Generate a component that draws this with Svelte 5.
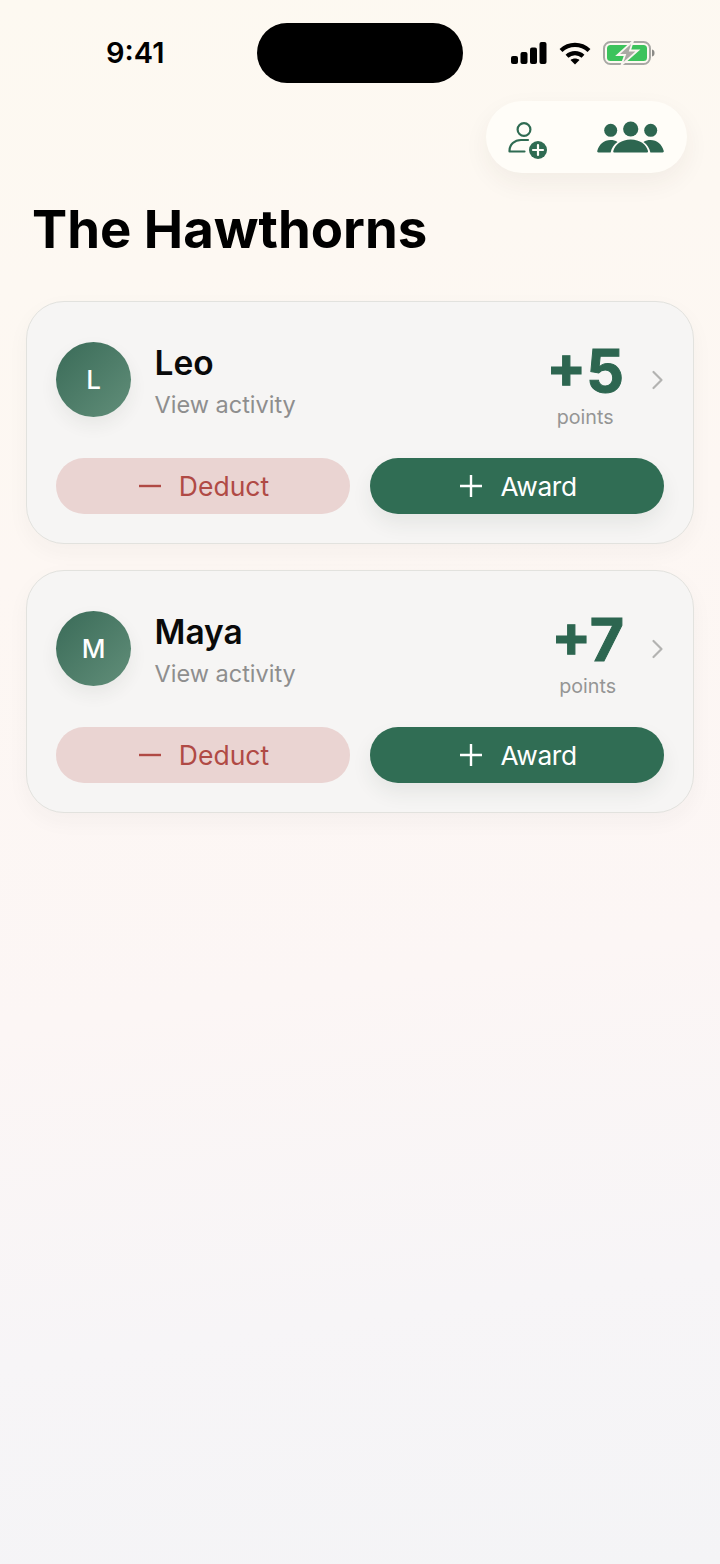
<script>
  const kids = [
    { name: 'Leo', initial: 'L', points: '+5' },
    { name: 'Maya', initial: 'M', points: '+7' }
  ];
</script>

<div class="page">
  <header class="status">
    <span class="time">9:41</span>
    <div class="island"></div>
    <div class="indicators">
      <svg width="36" height="22" viewBox="0 0 36 22" fill="#000">
        <rect x="0" y="14" width="7" height="8" rx="2" />
        <rect x="9.500" y="10" width="7" height="12" rx="2" />
        <rect x="19" y="5.500" width="7" height="16.500" rx="2" />
        <rect x="28.500" y="0" width="7" height="22" rx="2" />
      </svg>
      <svg width="32" height="23" viewBox="0 0 32 23" fill="none" stroke="#000" stroke-width="4.200">
        <path d="M2 8.500C10 1 22 1 30 8.500" />
        <path d="M8 14.200C12.500 10 19.500 10 24 14.200" />
        <path d="M16 22.500l-4.500-4.600c2.500-2 6.500-2 9 0z" fill="#000" stroke="none" />
      </svg>
      <svg width="52" height="24" viewBox="0 0 52 24">
        <rect x="1" y="1" width="46" height="22" rx="6.500" fill="none" stroke="#a8a8a4" stroke-width="2" />
        <rect x="4" y="4" width="40" height="16" rx="3.500" fill="#3cc35c" />
        <path d="M49 8.500c2 .5 2.500 1.800 2.500 3.500s-.5 3-2.500 3.500z" fill="#8a8a86" />
        <path d="M30 0 14.500 14h7.500l-3.500 10L35 9.500h-8z" fill="#a9a9a3" stroke="#f9f6f0" stroke-width="1.800" />
      </svg>
    </div>
  </header>

  <div class="toolbar">
    <div class="pill">
      <button class="icon-btn" aria-label="Add member">
        <svg width="42" height="44" viewBox="0 0 42 44" fill="none">
          <circle cx="16" cy="14.500" r="6.400" stroke="#2f6b52" stroke-width="2.200" />
          <path d="M1.500 36c0-6.500 5-11 11.500-11h7M1.500 36.500h15" stroke="#2f6b52" stroke-width="2.200" stroke-linecap="round" />
          <circle cx="30" cy="35" r="9" fill="#2f6b52" />
          <path d="M30 30v10M25 35h10" stroke="#fffdf9" stroke-width="2.200" stroke-linecap="round" />
        </svg>
      </button>
      <button class="icon-btn" aria-label="Family">
        <svg width="68" height="34" viewBox="0 0 68 34" fill="#2d6650">
          <circle cx="13.700" cy="10.300" r="6.500" />
          <circle cx="33.700" cy="9" r="7.600" />
          <circle cx="53.700" cy="10.300" r="6.500" />
          <path d="M1.500 32.500c-1 0-1.500-.7-1.200-1.700C2 24.500 7 20 13.500 20c2.600 0 5 .6 7 2-3.600 2.500-5.900 6-6.900 10.500z" />
          <path d="M65.500 32.500c1 0 1.500-.7 1.200-1.700C65 24.500 60 20 53.500 20c-2.600 0-5 .6-7 2 3.600 2.500 5.900 6 6.900 10.500z" />
          <path d="M17.500 32.500c-1 0-1.500-.7-1.200-1.500C18 24.500 24.500 19.500 33.700 19.500S49.500 24.500 51 31c.2.800-.3 1.500-1.200 1.500z" />
        </svg>
      </button>
    </div>
  </div>

  <h1>The Hawthorns</h1>

  <div class="list">
    {#each kids as kid}
      <section class="card">
        <div class="top">
          <div class="avatar">{kid.initial}</div>
          <div class="who">
            <div class="name">{kid.name}</div>
            <div class="sub">View activity</div>
          </div>
          <div class="score">
            <div class="num">{kid.points}</div>
            <div class="label">points</div>
          </div>
          <svg class="chev" width="14" height="20" viewBox="0 0 14 20" fill="none">
            <path d="M3.500 2 11.500 10l-8 8" stroke="#b3b3b1" stroke-width="2.200" stroke-linecap="round" stroke-linejoin="round" />
          </svg>
        </div>
        <div class="actions">
          <button class="btn deduct">
            <svg width="24" height="24" viewBox="0 0 24 24"><path d="M1 12h22" stroke="#b04a45" stroke-width="2.400" /></svg>
            Deduct
          </button>
          <button class="btn award">
            <svg width="24" height="24" viewBox="0 0 24 24"><path d="M1 12h22M12 1v22" stroke="#fff" stroke-width="2.400" /></svg>
            Award
          </button>
        </div>
      </section>
    {/each}
  </div>
</div>

<style>
  :global(body) {
    margin: 0;
    background: #f5f4f6;
  }

  .page {
    width: 720px;
    height: 1564px;
    overflow: hidden;
    box-sizing: border-box;
    font-family: Inter, "Liberation Sans", sans-serif;
    background: linear-gradient(172deg, #fdf9f1 0%, #fdf7f3 35%, #fcf6f5 62%, #f7f5f7 82%, #f4f4f6 100%);
  }

  .status {
    height: 101px;
    display: flex;
    align-items: flex-start;
    padding: 23px 0 0 106px;
    box-sizing: border-box;
  }

  .time {
    flex: none;
    width: 151px;
    margin-top: 12px;
    font-size: 29px;
    line-height: 36px;
    font-weight: 600;
    color: #000;
  }

  .island {
    flex: none;
    width: 206px;
    height: 60px;
    border-radius: 30px;
    background: #000;
  }

  .indicators {
    display: flex;
    align-items: center;
    gap: 12px;
    margin: 18px 0 0 48px;
  }

  .toolbar {
    display: flex;
    justify-content: flex-end;
    padding-right: 33px;
  }

  .pill {
    width: 201px;
    height: 72px;
    box-sizing: border-box;
    padding: 0 22px 0 22px;
    border-radius: 36px;
    background: #fffdf8;
    box-shadow: 0 10px 26px rgba(60, 50, 40, 0.06);
    display: flex;
    align-items: center;
    justify-content: space-between;
  }

  .icon-btn {
    padding: 0;
    border: 0;
    background: none;
    display: flex;
  }

  h1 {
    margin: 26px 0 42px 32px;
    font-size: 52.700px;
    line-height: 60px;
    font-weight: 700;
    color: #000;
  }

  .list {
    display: flex;
    flex-direction: column;
    gap: 26px;
    padding: 0 26px;
  }

  .card {
    height: 243px;
    box-sizing: border-box;
    padding: 40px 29px 28px;
    border: 1px solid #e2e2de;
    border-radius: 38px;
    background: #f6f5f4;
    box-shadow: 0 8px 22px rgba(60, 50, 40, 0.04);
  }

  .top {
    height: 116px;
    display: flex;
    align-items: flex-start;
  }

  .avatar {
    width: 75px;
    height: 75px;
    border-radius: 50%;
    background: linear-gradient(135deg, #3a6b58 0%, #618e79 100%);
    box-shadow: 0 8px 18px rgba(40, 50, 40, 0.07);
    color: #fff;
    font-size: 26px;
    font-weight: 500;
    display: flex;
    align-items: center;
    justify-content: center;
  }

  .who {
    flex: 1;
    margin-left: 23.500px;
  }

  .name {
    margin-top: 1px;
    font-size: 33.500px;
    line-height: 40px;
    font-weight: 600;
    color: #0a0a0a;
  }

  .sub {
    margin-top: 6px;
    font-size: 23.500px;
    line-height: 32px;
    color: #8e8e8e;
  }

  .score {
    display: flex;
    flex-direction: column;
    align-items: center;
    margin-right: 26px;
  }

  .num {
    margin-top: -5px;
    font-size: 59px;
    line-height: 68px;
    font-weight: 700;
    color: #2d6650;
    -webkit-text-stroke: 1px #2d6650;
  }

  .label {
    margin-top: -1px;
    font-size: 19.700px;
    line-height: 26px;
    color: #959595;
  }

  .chev {
    margin: 28px 0 0 0;
  }

  .actions {
    display: grid;
    grid-template-columns: 1fr 1fr;
    gap: 20px;
  }

  .btn {
    height: 56px;
    padding: 0;
    border: 0;
    border-radius: 28px;
    font-family: inherit;
    font-size: 26.500px;
    display: flex;
    align-items: center;
    justify-content: center;
    gap: 17px;
  }

  .deduct {
    padding-left: 1px;
    background: #ead4d2;
    color: #b04a45;
  }

  .award {
    padding-left: 2px;
    background: #306d54;
    color: #fff;
    font-size: 26.300px;
    letter-spacing: -0.4px;
    box-shadow: 0 10px 20px rgba(40, 70, 55, 0.08);
  }
</style>
